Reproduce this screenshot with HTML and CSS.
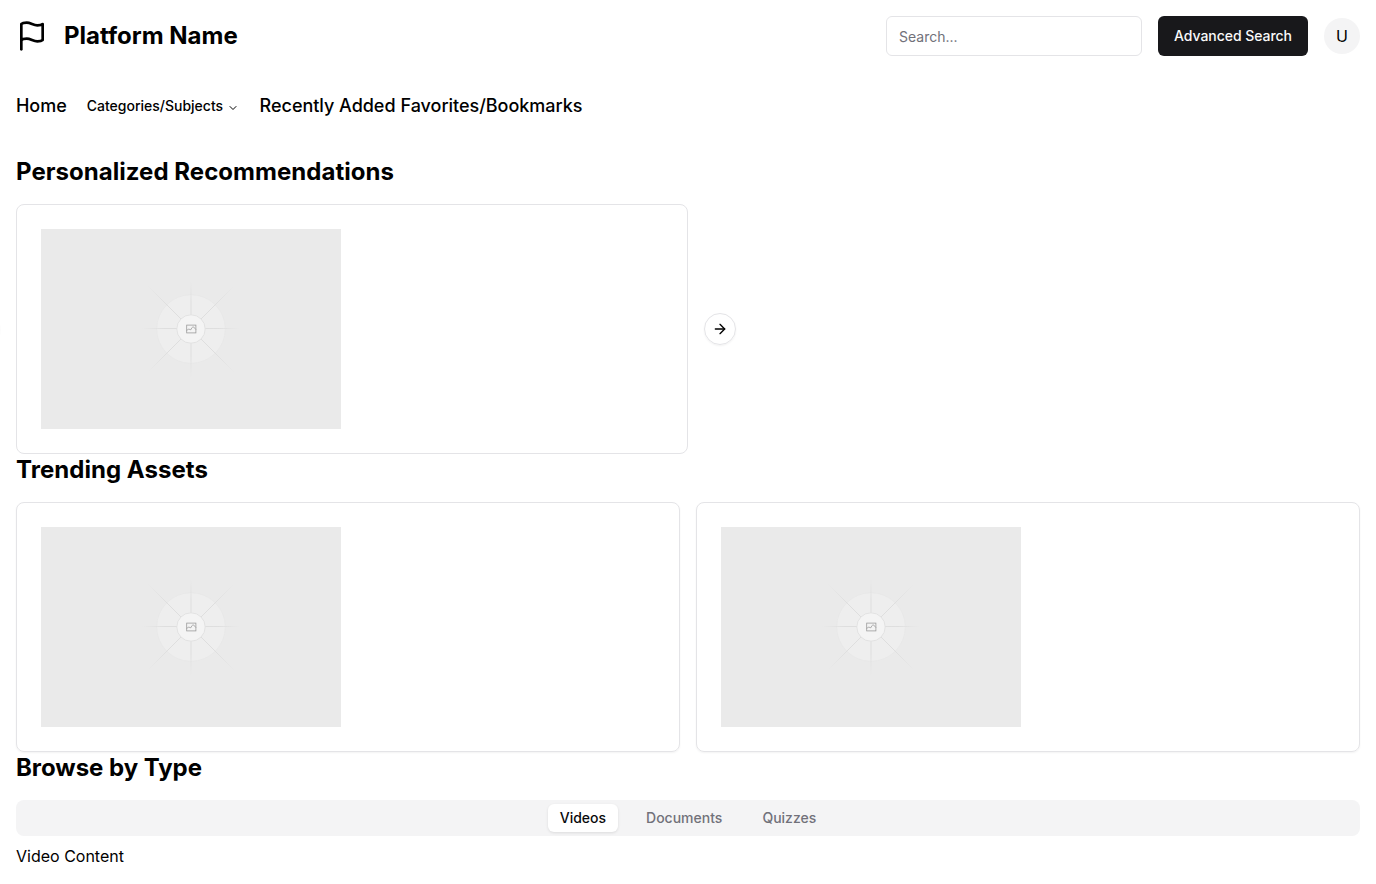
FILE: index.html
```html
<!DOCTYPE html>
<html lang="en">
<head>
<meta charset="utf-8">
<title>Platform Name</title>
<link rel="stylesheet" href="styles.css">
</head>
<body>
<svg class="defs" aria-hidden="true">
  <defs>
    <radialGradient id="ray" gradientUnits="userSpaceOnUse" cx="150" cy="100" r="61">
      <stop offset="0" stop-color="#dedede"/><stop offset=".55" stop-color="#dedede"/><stop offset="1" stop-color="#dedede" stop-opacity="0"/>
    </radialGradient>
    <radialGradient id="axis" gradientUnits="userSpaceOnUse" cx="150" cy="100" r="49">
      <stop offset="0" stop-color="#dedede"/><stop offset=".55" stop-color="#dedede"/><stop offset="1" stop-color="#dedede" stop-opacity="0"/>
    </radialGradient>
    <symbol id="placeholder" viewBox="0 0 300 200">
      <rect width="300" height="200" fill="#eaeaea"/>
      <circle cx="150" cy="100" r="34.3" fill="#eeeeee" stroke="#e7e7e7" stroke-width=".8"/>
      <path stroke="url(#axis)" fill="none" d="M101 99.51L199 99.49M149.99 51L150.01 149"/>
      <path stroke="url(#ray)" fill="none" d="M107 57L193 143M193 57L107 143"/>
      <circle cx="150" cy="100" r="14.2" fill="#f4f4f4" stroke="#e0e0e0" stroke-width=".9"/>
      <g fill="none" stroke="#9b9b9b" stroke-width=".8">
        <rect x="145.7" y="96.1" width="9.2" height="7.8"/>
        <path d="M145.9 101.2l1.9-1.1 2 .7 1.1-2.1c.8-1.1 2.4-.8 2.7.4l1.2 1.3"/>
      </g>
    </symbol>
  </defs>
</svg>
<header class="header">
  <div class="brand">
    <svg class="flag" viewBox="0 0 24 24"><path d="M4 15s1-1 4-1 5 2 8 2 4-1 4-1V3s-1 1-4 1-5-2-8-2-4 1-4 1z"/><path d="M4 22v-7"/></svg>
    <h1>Platform Name</h1>
  </div>
  <div class="actions">
    <input class="search" placeholder="Search...">
    <button class="advanced">Advanced Search</button>
    <span class="avatar">U</span>
  </div>
</header>
<nav class="nav">
  <a>Home</a>
  <button class="categories">Categories/Subjects <svg viewBox="0 0 24 24"><path d="m6 9 6 6 6-6"/></svg></button>
  <a>Recently Added</a>
  <a>Favorites/Bookmarks</a>
</nav>
<main class="main">
  <section>
    <h2 class="wide">Personalized Recommendations</h2>
    <div class="carousel">
      <button class="arrow prev" aria-label="Previous"></button>
      <div class="card flat"><svg class="thumb"><use href="#placeholder"/></svg></div>
      <button class="arrow" aria-label="Next"><svg viewBox="0 0 24 24"><path d="M5 12h14"/><path d="m12 5 7 7-7 7"/></svg></button>
    </div>
  </section>
  <section>
    <h2 class="wide">Trending Assets</h2>
    <div class="grid">
      <div class="card"><svg class="thumb"><use href="#placeholder"/></svg></div>
      <div class="card"><svg class="thumb"><use href="#placeholder"/></svg></div>
    </div>
  </section>
  <section>
    <h2 class="narrow">Browse by Type</h2>
    <div class="tabs"><button class="tab active">Videos</button><button class="tab">Documents</button><button class="tab">Quizzes</button></div>
    <p class="content">Video Content</p>
  </section>
</main>
</body>
</html>
```
FILE: styles.css
```css
* { box-sizing: border-box; margin: 0; padding: 0; }
body { font: 16px/24px Inter, sans-serif; color: #000; background: #fff; overflow: hidden; }
button, input { font: inherit; color: inherit; border: 0; background: none; }
svg path { stroke-linecap: round; stroke-linejoin: round; }
.defs { position: absolute; width: 0; height: 0; }
.header { display: flex; justify-content: space-between; align-items: center; height: 72px; padding: 0 16px; }
.brand, .actions { display: flex; align-items: center; gap: 16px; }
.flag { width: 32px; height: 32px; fill: none; stroke: currentColor; stroke-width: 2; }
h1, h2 { font-size: 24px; line-height: 32px; font-weight: 700; }
.wide { letter-spacing: .036px; }
.narrow { letter-spacing: -.04px; }
.search { width: 256px; height: 40px; padding: 1px 12px 0; border: 1px solid #e4e4e7; border-radius: 6px; font-size: 14px; }
.search::placeholder { color: #71717a; }
.advanced { width: 150px; height: 40px; border-radius: 6px; background: #18181b; color: #fafafa; font-size: 14px; font-weight: 500; white-space: nowrap; letter-spacing: -.04px; }
.avatar { width: 36px; height: 36px; border-radius: 50%; background: #f4f4f5; display: grid; place-items: center; }
.nav { display: flex; align-items: center; height: 68px; padding: 0 16px; font-size: 18px; line-height: 28px; font-weight: 500; gap: 5px; letter-spacing: -.03px; }
.categories { display: flex; align-items: center; gap: 4px; padding: 0 16px; margin: 0 -.5px 0 -1px; font-size: 14px; font-weight: 500; letter-spacing: 0; }
.categories svg { width: 12px; height: 12px; margin-top: 3px; fill: none; stroke: currentColor; stroke-width: 2; }
.main { padding: 16px; }
h2 { margin-bottom: 16px; }
.card { border: 1px solid #e4e4e7; border-radius: 8px; padding: 24px; height: 250px; box-shadow: 0 1px 2px rgba(0,0,0,.05); }
.carousel { position: relative; display: flex; align-items: center; gap: 16px; }
.carousel .card { width: 672px; }
.flat { box-shadow: none; }
.thumb { display: block; width: 300px; height: 200px; }
.arrow { width: 32px; height: 32px; border: 1px solid #e4e4e7; border-radius: 50%; display: grid; place-items: center; box-shadow: 0 1px 2px rgba(0,0,0,.05); }
.prev { position: absolute; left: -48px; top: calc(50% - 16px); }
.arrow svg { width: 16px; height: 16px; fill: none; stroke: currentColor; stroke-width: 2; }
.grid { display: grid; grid-template-columns: 1fr 1fr; gap: 16px; }
.tabs { display: flex; justify-content: center; align-items: center; height: 36px; gap: 16px; border-radius: 8px; background: #f4f4f5; }
.tab { height: 28px; padding: 0 12px; border-radius: 6px; font-size: 14px; font-weight: 500; color: #71717a; }
.active { background: #fff; color: #09090b; box-shadow: 0 1px 3px rgba(0,0,0,.1); }
.content { margin-top: 8px; }
```
